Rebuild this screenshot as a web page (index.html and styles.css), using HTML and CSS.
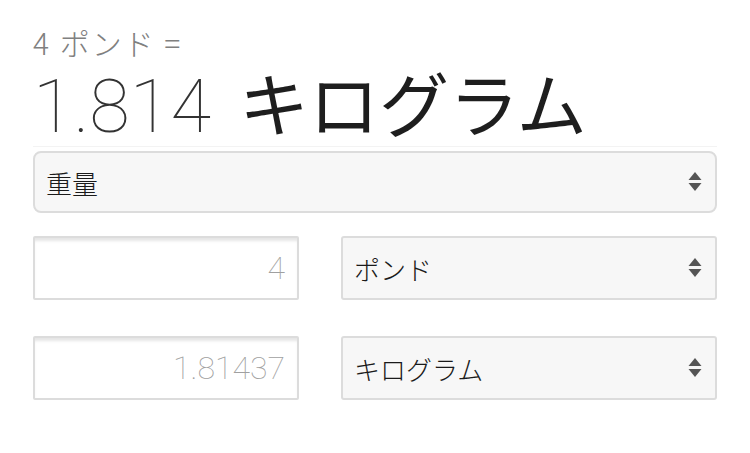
FILE: index.html
```html
<!DOCTYPE html>
<html lang="ja">
<head>
<meta charset="utf-8">
<link rel="stylesheet" href="styles.css">
</head>
<body>
<div class="page">
  <div class="result">
    <div class="from">4 ポンド =</div>
    <div class="to"><span class="num">1.814</span><span class="unit">キログラム</span></div>
  </div>
  <div class="select wide">
    <span class="label">重量</span>
    <svg class="arrows" width="14" height="22" viewBox="0 0 14 22"><path d="M7 1 L13.5 9 L0.5 9 Z M0.5 12 L13.5 12 L7 20 Z" fill="#555"/></svg>
  </div>
  <div class="row">
    <div class="field"><span class="value">4</span></div>
    <div class="select">
      <span class="label">ポンド</span>
      <svg class="arrows" width="14" height="22" viewBox="0 0 14 22"><path d="M7 1 L13.5 9 L0.5 9 Z M0.5 12 L13.5 12 L7 20 Z" fill="#555"/></svg>
    </div>
  </div>
  <div class="row second">
    <div class="field"><span class="value">1.81437</span></div>
    <div class="select">
      <span class="label">キログラム</span>
      <svg class="arrows" width="14" height="22" viewBox="0 0 14 22"><path d="M7 1 L13.5 9 L0.5 9 Z M0.5 12 L13.5 12 L7 20 Z" fill="#555"/></svg>
    </div>
  </div>
</div>
</body>
</html>
```

FILE: styles.css
```css
html, body {
  margin: 0;
  padding: 0;
  background: #fff;
}
body {
  font-family: "Noto Sans CJK JP", "Liberation Sans", sans-serif;
  color: #222;
}
.page {
  width: 684px;
  padding: 23px 0 0 33px;
}
.result {
  border-bottom: 1px solid #f3f3f3;
  padding-bottom: 0;
  margin-bottom: 4px;
}
.from {
  font-size: 30px;
  line-height: 39px;
  color: #808080;
  font-weight: 300;
  letter-spacing: 2px;
}
.to {
  font-size: 70px;
  line-height: 79px;
  white-space: nowrap;
}
.num {
  font-family: "Roboto", "Inter", sans-serif;
  font-size: 74px;
  font-weight: 100;
  color: #333;
  margin-right: 28px;
}
.unit {
  font-weight: 400;
  color: #1e1e1e;
}
.select {
  box-sizing: border-box;
  height: 64px;
  background: #f7f7f7;
  border: 2px solid #dcdcdc;
  border-radius: 3px;
  display: flex;
  align-items: center;
  justify-content: space-between;
  padding: 0 13px 0 11px;
  flex: 0 0 376px;
}
.select.wide {
  height: 62px;
  border-radius: 8px;
  padding-left: 11px;
}
.label {
  font-size: 26px;
  font-weight: 300;
  color: #1a1a1a;
}
.arrows {
  display: block;
}
.row {
  display: flex;
  gap: 42px;
  margin-top: 23px;
}
.row.second {
  margin-top: 36px;
}
.field {
  box-sizing: border-box;
  flex: 0 0 266px;
  height: 64px;
  border: 2px solid #dcdcdc;
  border-radius: 2px;
  box-shadow: inset 0 4px 3px -1px rgba(0, 0, 0, 0.1);
  display: flex;
  align-items: center;
  justify-content: flex-end;
  padding-right: 12px;
  background: #fff;
}
.value {
  font-family: "Roboto", "Inter", sans-serif;
  font-weight: 100;
  font-size: 32px;
  color: #a0a0a0;
}
```
